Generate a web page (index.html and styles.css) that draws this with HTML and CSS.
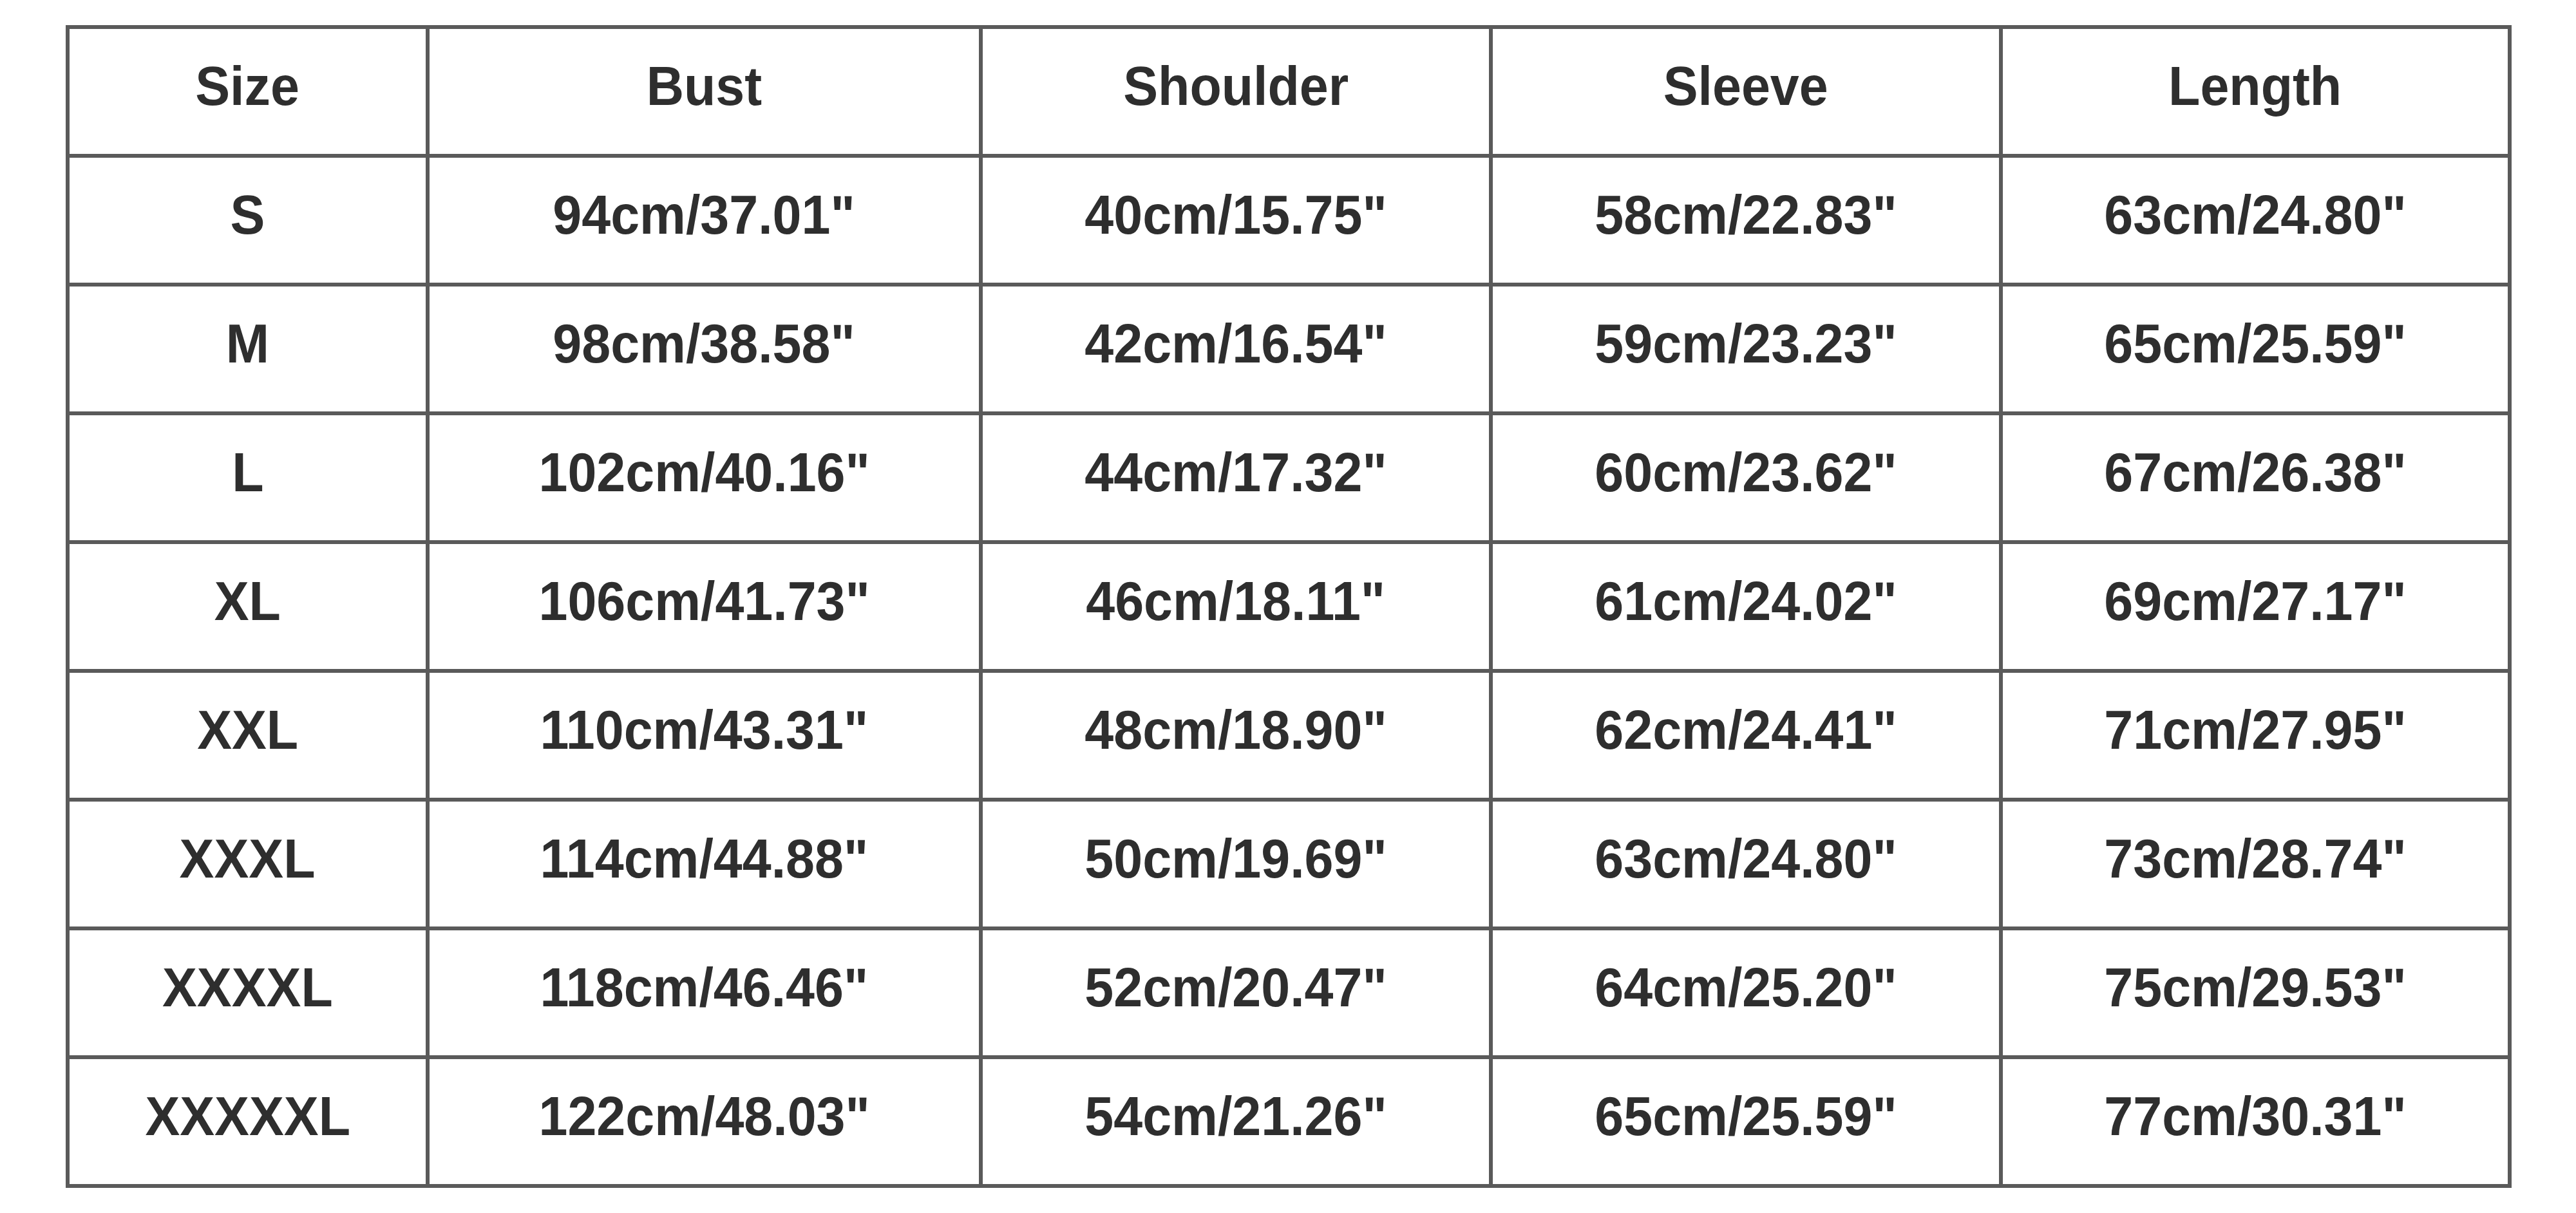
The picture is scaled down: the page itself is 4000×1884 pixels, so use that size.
FILE: index.html
```html
<!DOCTYPE html>
<html lang="en">
<head>
<meta charset="utf-8">
<title>Size Chart</title>
<link rel="stylesheet" href="styles.css">
</head>
<body>
<main class="page">
  <div class="chart">
    <div class="cell"><span class="txt">Size</span></div>
    <div class="cell"><span class="txt">Bust</span></div>
    <div class="cell"><span class="txt">Shoulder</span></div>
    <div class="cell"><span class="txt">Sleeve</span></div>
    <div class="cell"><span class="txt">Length</span></div>

    <div class="cell"><span class="txt">S</span></div>
    <div class="cell"><span class="txt">94cm/37.01"</span></div>
    <div class="cell"><span class="txt">40cm/15.75"</span></div>
    <div class="cell"><span class="txt">58cm/22.83"</span></div>
    <div class="cell"><span class="txt">63cm/24.80"</span></div>

    <div class="cell"><span class="txt">M</span></div>
    <div class="cell"><span class="txt">98cm/38.58"</span></div>
    <div class="cell"><span class="txt">42cm/16.54"</span></div>
    <div class="cell"><span class="txt">59cm/23.23"</span></div>
    <div class="cell"><span class="txt">65cm/25.59"</span></div>

    <div class="cell"><span class="txt">L</span></div>
    <div class="cell"><span class="txt">102cm/40.16"</span></div>
    <div class="cell"><span class="txt">44cm/17.32"</span></div>
    <div class="cell"><span class="txt">60cm/23.62"</span></div>
    <div class="cell"><span class="txt">67cm/26.38"</span></div>

    <div class="cell"><span class="txt">XL</span></div>
    <div class="cell"><span class="txt">106cm/41.73"</span></div>
    <div class="cell"><span class="txt">46cm/18.11"</span></div>
    <div class="cell"><span class="txt">61cm/24.02"</span></div>
    <div class="cell"><span class="txt">69cm/27.17"</span></div>

    <div class="cell"><span class="txt">XXL</span></div>
    <div class="cell"><span class="txt">110cm/43.31"</span></div>
    <div class="cell"><span class="txt">48cm/18.90"</span></div>
    <div class="cell"><span class="txt">62cm/24.41"</span></div>
    <div class="cell"><span class="txt">71cm/27.95"</span></div>

    <div class="cell"><span class="txt">XXXL</span></div>
    <div class="cell"><span class="txt">114cm/44.88"</span></div>
    <div class="cell"><span class="txt">50cm/19.69"</span></div>
    <div class="cell"><span class="txt">63cm/24.80"</span></div>
    <div class="cell"><span class="txt">73cm/28.74"</span></div>

    <div class="cell"><span class="txt">XXXXL</span></div>
    <div class="cell"><span class="txt">118cm/46.46"</span></div>
    <div class="cell"><span class="txt">52cm/20.47"</span></div>
    <div class="cell"><span class="txt">64cm/25.20"</span></div>
    <div class="cell"><span class="txt">75cm/29.53"</span></div>

    <div class="cell"><span class="txt">XXXXXL</span></div>
    <div class="cell"><span class="txt">122cm/48.03"</span></div>
    <div class="cell"><span class="txt">54cm/21.26"</span></div>
    <div class="cell"><span class="txt">65cm/25.59"</span></div>
    <div class="cell"><span class="txt">77cm/30.31"</span></div>
  </div>
</main>
</body>
</html>
```

FILE: styles.css
```css
html, body {
  margin: 0;
  padding: 0;
  background: #ffffff;
}

.page {
  padding: 39px 0 0 102px;
}

.chart {
  display: grid;
  grid-template-columns: 553px 853px 786px 786px 784px;
  grid-auto-rows: 194px;
  gap: 6px;
  padding: 6px;
  width: max-content;
  background: #5a5a5a;
}

.cell {
  background: #ffffff;
  display: flex;
  align-items: center;
  justify-content: center;
  padding-bottom: 16px;
  box-sizing: border-box;
}

.txt {
  display: inline-block;
  font-family: "Liberation Sans", Arial, sans-serif;
  font-weight: bold;
  font-size: 85px;
  color: #2e2e2e;
  white-space: nowrap;
  transform: scaleX(0.95);
}
```
